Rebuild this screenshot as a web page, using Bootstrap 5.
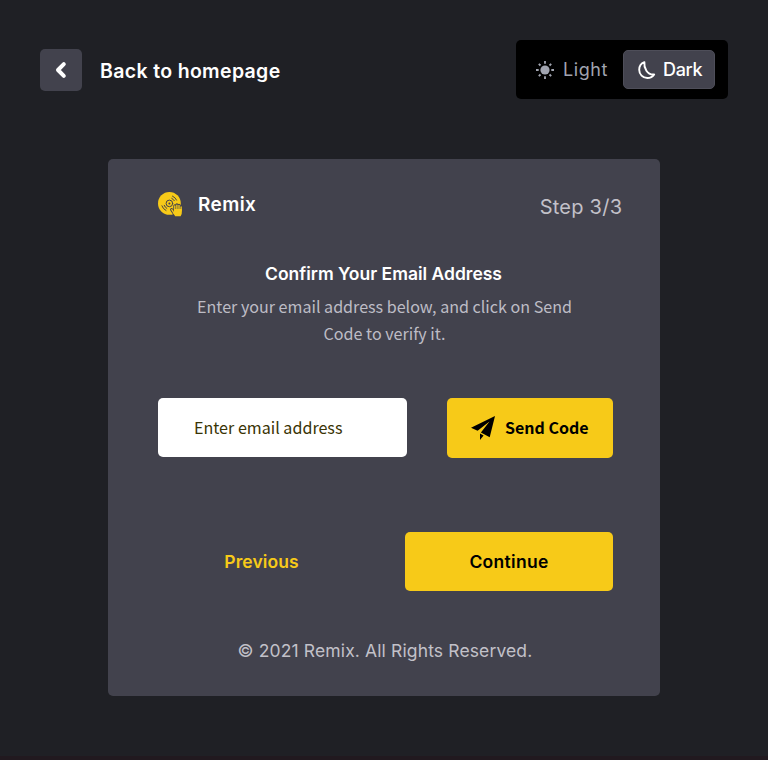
<!DOCTYPE html>
<html lang="en">
<head>
<meta charset="utf-8">
<meta name="viewport" content="width=device-width, initial-scale=1">
<title>Remix - Confirm Your Email Address</title>
<link href="https://cdn.jsdelivr.net/npm/bootstrap@5.3.0/dist/css/bootstrap.min.css" rel="stylesheet">
<style>
  body { background: #1f2025; font-family: Inter, "Liberation Sans", sans-serif; color: #fff; height: 760px; overflow: hidden; border-bottom: 4px solid #21191f; }
  .page-head { padding: 40px 40px 0; height: 99px; }
  .back-btn { width: 42px; height: 42px; margin-top: 9px; background: #42424d; border-radius: 5px; }
  .back-label { font-size: 19.5px; font-weight: 600; line-height: 24px; margin: 19px 0 0 18px; letter-spacing: .34px; }
  .switcher { width: 212px; height: 59px; background: #000; border-radius: 5px; padding: 10px 13px 10px 20px; font-size: 18px; }
  .mode-light { color: #a1a4b0; gap: 9px; letter-spacing: .55px; }
  .mode-dark { width: 92px; height: 39px; background: #42424d; border: 1px solid #4e4e59; border-radius: 5px; padding-left: 14px; gap: 7px; font-weight: 500; color: #fff; letter-spacing: -.3px; }
  .panel { width: 552px; height: 537px; margin: 60px auto 0; background: #42424d; border-radius: 5px; padding: 0 47px 0 50px; }
  .panel-head { height: 48px; margin: 26px -9px 0 0; }
  .brand { font-size: 19px; font-weight: 600; line-height: 24px; gap: 15px; margin-top: 7px; letter-spacing: .4px; }
  .brand-name { margin-top: 1px; }
  .step { font-size: 20px; line-height: 24px; color: #c2c1c9; margin-top: 10px; letter-spacing: .25px; margin-right: -.25px; }
  .title { font-size: 17.5px; font-weight: 600; line-height: 24px; margin: 29px 4px 0 0; }
  .hint { font-family: "Noto Sans CJK SC", sans-serif; font-size: 16.1px; line-height: 27px; color: #bdbcc5; margin: 7px 2px 0 0; }
  .email { width: 249px; height: 59px; border: 0; border-radius: 5px; padding: 0 36px 2px; font-family: "Noto Sans CJK SC", sans-serif; font-size: 16.1px; }
  .email::placeholder { color: #3a3405; opacity: 1; }
  .row-send { margin-top: 51px; }
  .row-nav { margin-top: 74px; }
  .btn-gold { background: #f7ca18; color: #000; border: 0; border-radius: 5px; }
  .btn-gold:hover { background: #e6bb10; color: #000; }
  .send { width: 166px; height: 60px; padding: 0 0 0 24px; gap: 10px; font-family: "Noto Sans CJK SC", sans-serif; font-weight: 700; font-size: 16px; }
  .send-text { margin-top: -2px; }
  .prev { width: 207px; color: #f7ca18; font-size: 17.5px; font-weight: 600; padding-top: 2px; letter-spacing: .08px; }
  .next { width: 208px; height: 59px; font-size: 17.5px; font-weight: 600; letter-spacing: .3px; padding: 2px 0 0; }
  .copy { font-size: 17.5px; line-height: 24px; color: #c2c1c9; margin: 48px 0 0 -1px; letter-spacing: .13px; }
</style>
</head>
<body>
<header class="page-head d-flex justify-content-between align-items-start">
  <a href="#" class="d-flex text-white text-decoration-none text-nowrap">
    <span class="back-btn d-flex align-items-center justify-content-center">
      <svg width="16" height="18" viewBox="0 0 16 18" fill="none" stroke="#fff" stroke-width="4" stroke-linecap="round" stroke-linejoin="round"><path d="M10.800 3.200 5 9l5.800 5.800"/></svg>
    </span>
    <span class="back-label">Back to homepage</span>
  </a>
  <div class="switcher d-flex align-items-center justify-content-between text-nowrap">
    <span class="mode-light d-flex align-items-center">
      <svg width="18" height="18" viewBox="0 0 18 18" stroke="#a1a4b0" stroke-width="1.8"><circle cx="9" cy="9" r="4.6" fill="#a1a4b0" stroke="none"/><path d="M9 0v2.7M9 15.3V18M0 9h2.700M15.300 9H18M2.800 2.800l1.700 1.700M13.500 13.500l1.700 1.700M2.800 15.200l1.700-1.700M13.500 4.500l1.700-1.700"/></svg>
      <span>Light</span>
    </span>
    <span class="mode-dark d-flex align-items-center">
      <svg width="18" height="18" viewBox="0 0 18 18" fill="none" stroke="#fff" stroke-width="1.900" stroke-linejoin="round"><path d="M6.400 1.200C3.300 2.400 1.200 5.300 1.200 8.800c0 4.500 3.600 8.200 8.100 8.200 2.900 0 5.500-1.400 6.900-3.500-3.200.3-6-1-7.800-3.800C6.600 6.900 6 4.200 6.400 1.200Z"/></svg>
      <span>Dark</span>
    </span>
  </div>
</header>

<main class="panel d-flow-root overflow-hidden">
  <div class="panel-head d-flex justify-content-between text-nowrap">
    <div class="brand d-flex">
      <svg width="25" height="25" viewBox="0 0 25 25" stroke-linecap="round" stroke-linejoin="round">
        <circle cx="11.400" cy="11.400" r="11.400" fill="#f7ca18"/>
        <g fill="none" stroke="#42424d" stroke-width="1"><circle cx="11.400" cy="11.400" r="3.300"/><path d="M3.900 13.800A8 8 0 0 0 8 18.500M6.200 13.300a5.600 5.600 0 0 0 2.600 3.100M14.500 4.100A8 8 0 0 1 18.600 8.100M13.800 6.400A5.600 5.600 0 0 1 16.300 8.700"/></g>
        <circle cx="11.400" cy="11.400" r="1" fill="#42424d"/>
        <path d="M13.600 17.600l2.700 4M16.800 18v-4.300M18.900 18v-5.200M21 18v-4.800M23 18v-3.200" fill="none" stroke="#42424d" stroke-width="3"/>
        <path d="M16 17h7.800v3.800c0 1.300-.5 2.300-1.200 3.400h-5.400c-.6-.9-1.200-1.800-1.700-3Z" fill="#f7ca18"/>
        <path d="M13.800 17.700l2.600 4.300M16.800 19v-5M18.900 19v-5.900M21 19v-5.500M23.100 19v-4" fill="none" stroke="#f7ca18" stroke-width="1.400"/>
      </svg>
      <span class="brand-name">Remix</span>
    </div>
    <div class="step">Step 3/3</div>
  </div>
  <h1 class="title text-center">Confirm Your Email Address</h1>
  <p class="hint text-center">Enter your email address below, and click on Send<br>Code to verify it.</p>
  <div class="row-send d-flex justify-content-between align-items-start">
    <input type="email" class="email form-control" placeholder="Enter email address">
    <button type="button" class="btn btn-gold send d-flex align-items-center text-nowrap">
      <svg width="24" height="24" viewBox="0 0 24 24"><path d="M24 0 0 11.700l6.600 3.100L18.500 5.500 9.900 16.600l8.800 4.700ZM9 17.600V24l3.600-4.600Z"/></svg>
      <span class="send-text">Send Code</span>
    </button>
  </div>
  <div class="row-nav d-flex justify-content-between align-items-center">
    <a href="#" class="prev text-center text-decoration-none">Previous</a>
    <button type="button" class="btn btn-gold next">Continue</button>
  </div>
  <p class="copy text-center text-nowrap">© 2021 Remix. All Rights Reserved.</p>
</main>
<script src="https://cdn.jsdelivr.net/npm/bootstrap@5.3.0/dist/js/bootstrap.bundle.min.js"></script>
</body>
</html>
